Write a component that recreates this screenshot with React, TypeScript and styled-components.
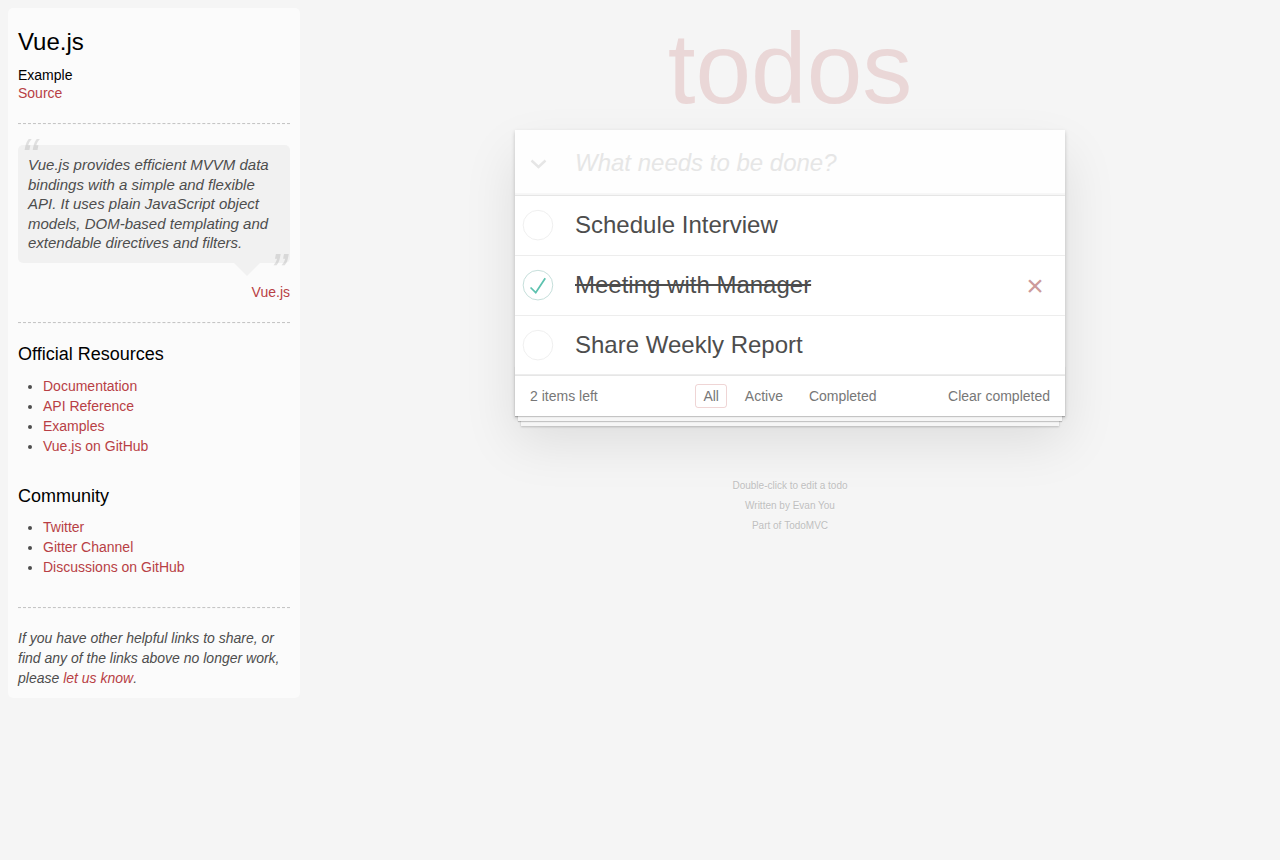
import React, { useState } from 'react';
import styled, { createGlobalStyle } from 'styled-components';

const GlobalStyle = createGlobalStyle`
  html, body {
    margin: 0;
    padding: 0;
  }
  body {
    font: 14px 'Liberation Sans', Arial, sans-serif;
    line-height: 1.4em;
    background: #f5f5f5;
    color: #4d4d4d;
    font-weight: 300;
    -webkit-font-smoothing: antialiased;
  }
`;

const Page = styled.div`
  display: flex;
  align-items: flex-start;
  padding: 8px 0 0 8px;
  min-height: 100vh;
  box-sizing: border-box;
`;

/* ---------- sidebar ---------- */

const Learn = styled.aside`
  width: 272px;
  flex-shrink: 0;
  padding: 10px;
  border-radius: 5px;
  background-color: rgba(255, 255, 255, 0.6);
`;

const Link = styled.a`
  font-weight: normal;
  text-decoration: none;
  color: #b83f45;
`;

const LearnTitle = styled.h1`
  margin: 10px 0;
  font-size: 24px;
  font-weight: 500;
  line-height: 1.2;
  color: #000;
`;

const SourceTitle = styled.h5`
  margin: 10px 0 0;
  font-size: 14px;
  font-weight: 500;
  line-height: 1.2;
  color: #000;
`;

const Rule = styled.hr`
  margin: 20px 0;
  height: 0;
  border: 0;
  border-top: 1px dashed #c5c5c5;
  border-bottom: 1px dashed #f7f7f7;
`;

const Quote = styled.blockquote`
  margin: 20px 0;
`;

const Bubble = styled.div`
  position: relative;
  padding: 10px;
  background: rgba(0, 0, 0, 0.04);
  border-radius: 5px;

  &::after {
    content: '';
    position: absolute;
    top: 100%;
    right: 30px;
    border: 13px solid transparent;
    border-top-color: rgba(0, 0, 0, 0.04);
  }
`;

const QuoteText = styled.p`
  margin: 0;
  font-size: 15px;
  font-weight: 300;
  line-height: 1.3;
  font-style: italic;

  &::before,
  &::after {
    font-size: 50px;
    opacity: 0.15;
    position: absolute;
  }
  &::before {
    content: '“';
    top: -20px;
    left: 3px;
  }
  &::after {
    content: '”';
    bottom: -42px;
    right: 3px;
  }
`;

const QuoteFooter = styled.footer`
  margin-top: 20px;
  text-align: right;
  line-height: 19.6px;
`;

const SectionTitle = styled.h4`
  margin: 10px 0;
  font-size: 18px;
  font-weight: 500;
  line-height: 1.2;
  color: #000;
`;

const LinkList = styled.ul`
  padding: 0;
  margin: 0 0 30px 25px;

  li {
    line-height: 20px;
  }
`;

const LearnFooter = styled.footer`
  em {
    display: block;
  }
`;

/* ---------- todo app ---------- */

const Main = styled.main`
  flex: 1;
  display: flex;
  flex-direction: column;
  align-items: center;
  padding-top: 10px;
`;

const Title = styled.h1`
  margin: 0 0 12px;
  font-size: 100px;
  line-height: 100px;
  font-weight: 100;
  color: rgba(175, 47, 47, 0.15);
  text-align: center;
  text-rendering: optimizeLegibility;
`;

const TodoApp = styled.section`
  width: 550px;
  background: #fff;
  box-shadow: 0 2px 4px 0 rgba(0, 0, 0, 0.2), 0 25px 50px 0 rgba(0, 0, 0, 0.1);
`;

const Header = styled.header`
  display: flex;
  height: 65px;
  background: rgba(0, 0, 0, 0.003);
  box-shadow: inset 0 -2px 1px rgba(0, 0, 0, 0.03);
`;

const ToggleAll = styled.label`
  width: 45px;
  flex-shrink: 0;
  display: flex;
  align-items: center;
  padding: 3px 0 0 15px;
  box-sizing: border-box;
  cursor: pointer;
`;

const NewTodo = styled.input`
  flex: 1;
  min-width: 0;
  margin: 0;
  padding: 16px 16px 16px 15px;
  border: 0;
  outline: none;
  background: transparent;
  font-family: inherit;
  font-size: 24px;
  font-weight: 300;
  line-height: 1.4em;
  color: inherit;

  &::placeholder {
    font-style: italic;
    font-weight: 300;
    color: #e6e6e6;
  }
`;

const TodoList = styled.ul`
  margin: 0;
  padding: 0;
  list-style: none;
  border-top: 1px solid #e6e6e6;
`;

const TodoRow = styled.li`
  display: flex;
  align-items: center;
  font-size: 24px;
  border-bottom: 1px solid #ededed;
`;

const ToggleBox = styled.svg`
  width: 40px;
  height: 40px;
  flex-shrink: 0;
  cursor: pointer;
`;

const TodoLabel = styled.label<{ $done: boolean }>`
  flex: 1;
  padding: 15px 15px 15px 20px;
  line-height: 1.2;
  word-break: break-all;
  color: #4d4d4d;
  text-decoration: ${(p) => (p.$done ? 'line-through' : 'none')};
`;

const Destroy = styled.button<{ $shown: boolean }>`
  width: 40px;
  height: 40px;
  margin-right: 10px;
  flex-shrink: 0;
  padding: 0;
  border: 0;
  background: none;
  font-family: inherit;
  font-size: 30px;
  line-height: 1.1;
  color: #cc9a9a;
  cursor: pointer;
  visibility: ${(p) => (p.$shown ? 'visible' : 'hidden')};

  &:hover {
    color: #af5b5e;
  }
`;

const Footer = styled.footer`
  position: relative;
  display: grid;
  grid-template-columns: 1fr auto 1fr;
  align-items: center;
  height: 20px;
  padding: 10px 15px;
  color: #777;
  border-top: 1px solid #e6e6e6;

  &::before {
    content: '';
    position: absolute;
    right: 0;
    bottom: 0;
    left: 0;
    height: 50px;
    overflow: hidden;
    pointer-events: none;
    box-shadow: 0 1px 1px rgba(0, 0, 0, 0.2), 0 8px 0 -3px #f6f6f6,
      0 9px 1px -3px rgba(0, 0, 0, 0.2), 0 16px 0 -6px #f6f6f6,
      0 17px 2px -6px rgba(0, 0, 0, 0.2);
  }
`;

const TodoCount = styled.span`
  justify-self: start;
`;

const Filters = styled.ul`
  margin: 0;
  padding: 0;
  list-style: none;
  white-space: nowrap;

  li {
    display: inline;
  }
`;

const FilterLink = styled.a<{ $selected: boolean }>`
  color: inherit;
  margin: 3px;
  padding: 3px 7px;
  text-decoration: none;
  border: 1px solid ${(p) => (p.$selected ? 'rgba(175, 47, 47, 0.2)' : 'transparent')};
  border-radius: 3px;
  cursor: pointer;

  &:hover {
    border-color: rgba(175, 47, 47, 0.1);
  }
`;

const ClearCompleted = styled.button`
  justify-self: end;
  padding: 0;
  border: 0;
  background: none;
  font: inherit;
  line-height: 20px;
  color: inherit;
  cursor: pointer;
`;

const Info = styled.footer`
  margin-top: 65px;
  display: flex;
  flex-direction: column;
  gap: 10px;
  color: #bfbfbf;
  font-size: 10px;
  text-shadow: 0 1px 0 rgba(255, 255, 255, 0.5);
  text-align: center;

  p {
    margin: 0;
    line-height: 1;
  }
  a {
    color: inherit;
    text-decoration: none;
    font-weight: 400;
  }
`;

interface Todo {
  id: number;
  title: string;
  completed: boolean;
}

type Filter = 'all' | 'active' | 'completed';

const Check = ({ done, onClick }: { done: boolean; onClick: () => void }) => (
  <ToggleBox viewBox="-10 -18 100 135" onClick={onClick}>
    <circle cx="50" cy="50" r="50" fill="none" stroke={done ? '#bddad5' : '#ededed'} strokeWidth="3" />
    {done && <path fill="#5dc2af" d="M72 25L42 71 27 56l-4 4 20 20 34-52z" />}
  </ToggleBox>
);

const resources = ['Documentation', 'API Reference', 'Examples', 'Vue.js on GitHub'];
const community = ['Twitter', 'Gitter Channel', 'Discussions on GitHub'];

const App = () => {
  const [todos, setTodos] = useState<Todo[]>([
    { id: 1, title: 'Schedule Interview', completed: false },
    { id: 2, title: 'Meeting with Manager', completed: true },
    { id: 3, title: 'Share Weekly Report', completed: false },
  ]);
  const [hovered, setHovered] = useState<number | null>(2);
  const [filter, setFilter] = useState<Filter>('all');
  const [draft, setDraft] = useState('');

  const remaining = todos.filter((t) => !t.completed).length;
  const visible = todos.filter((t) =>
    filter === 'all' ? true : filter === 'active' ? !t.completed : t.completed
  );

  const toggle = (id: number) =>
    setTodos(todos.map((t) => (t.id === id ? { ...t, completed: !t.completed } : t)));

  const addTodo = (e: React.KeyboardEvent<HTMLInputElement>) => {
    if (e.key !== 'Enter' || !draft.trim()) return;
    setTodos([...todos, { id: Date.now(), title: draft.trim(), completed: false }]);
    setDraft('');
  };

  return (
    <>
      <GlobalStyle />
      <Page>
        <Learn>
          <header>
            <LearnTitle>Vue.js</LearnTitle>
            <span>
              <SourceTitle>Example</SourceTitle>
              <Link href="#">Source</Link>
            </span>
          </header>
          <Rule />
          <Quote>
            <Bubble>
              <QuoteText>
                Vue.js provides efficient MVVM data bindings with a simple and flexible API. It uses
                plain JavaScript object models, DOM-based templating and extendable directives and
                filters.
              </QuoteText>
            </Bubble>
            <QuoteFooter>
              <Link href="#">Vue.js</Link>
            </QuoteFooter>
          </Quote>
          <Rule />
          <SectionTitle>Official Resources</SectionTitle>
          <LinkList>
            {resources.map((r) => (
              <li key={r}>
                <Link href="#">{r}</Link>
              </li>
            ))}
          </LinkList>
          <SectionTitle>Community</SectionTitle>
          <LinkList>
            {community.map((r) => (
              <li key={r}>
                <Link href="#">{r}</Link>
              </li>
            ))}
          </LinkList>
          <LearnFooter>
            <Rule />
            <em>
              If you have other helpful links to share, or find any of the links above no longer
              work, please <Link href="#">let us know</Link>.
            </em>
          </LearnFooter>
        </Learn>

        <Main>
          <Title>todos</Title>
          <TodoApp>
            <Header>
              <ToggleAll
                onClick={() => {
                  const all = todos.every((t) => t.completed);
                  setTodos(todos.map((t) => ({ ...t, completed: !all })));
                }}
              >
                <svg width="17" height="10" viewBox="0 0 17 10">
                  <path d="M1.5 1.5 L8.5 8 L15.5 1.5" fill="none" stroke="#e6e6e6" strokeWidth="2.4" />
                </svg>
              </ToggleAll>
              <NewTodo
                placeholder="What needs to be done?"
                value={draft}
                onChange={(e) => setDraft(e.target.value)}
                onKeyDown={addTodo}
              />
            </Header>
            <TodoList>
              {visible.map((t) => (
                <TodoRow
                  key={t.id}
                  onMouseEnter={() => setHovered(t.id)}
                  onMouseLeave={() => setHovered(null)}
                >
                  <Check done={t.completed} onClick={() => toggle(t.id)} />
                  <TodoLabel $done={t.completed}>{t.title}</TodoLabel>
                  <Destroy
                    $shown={hovered === t.id}
                    onClick={() => setTodos(todos.filter((x) => x.id !== t.id))}
                  >
                    ×
                  </Destroy>
                </TodoRow>
              ))}
            </TodoList>
            <Footer>
              <TodoCount>
                {remaining} {remaining === 1 ? 'item' : 'items'} left
              </TodoCount>
              <Filters>
                {(['all', 'active', 'completed'] as Filter[]).map((f, i) => (
                  <React.Fragment key={f}>
                    {i > 0 && ' '}
                    <li>
                      <FilterLink $selected={filter === f} onClick={() => setFilter(f)}>
                        {f === 'all' ? 'All' : f === 'active' ? 'Active' : 'Completed'}
                      </FilterLink>
                    </li>
                  </React.Fragment>
                ))}
              </Filters>
              <ClearCompleted onClick={() => setTodos(todos.filter((t) => !t.completed))}>
                Clear completed
              </ClearCompleted>
            </Footer>
          </TodoApp>
          <Info>
            <p>Double-click to edit a todo</p>
            <p>
              Written by <a href="#">Evan You</a>
            </p>
            <p>
              Part of <a href="#">TodoMVC</a>
            </p>
          </Info>
        </Main>
      </Page>
    </>
  );
};

export default App;
